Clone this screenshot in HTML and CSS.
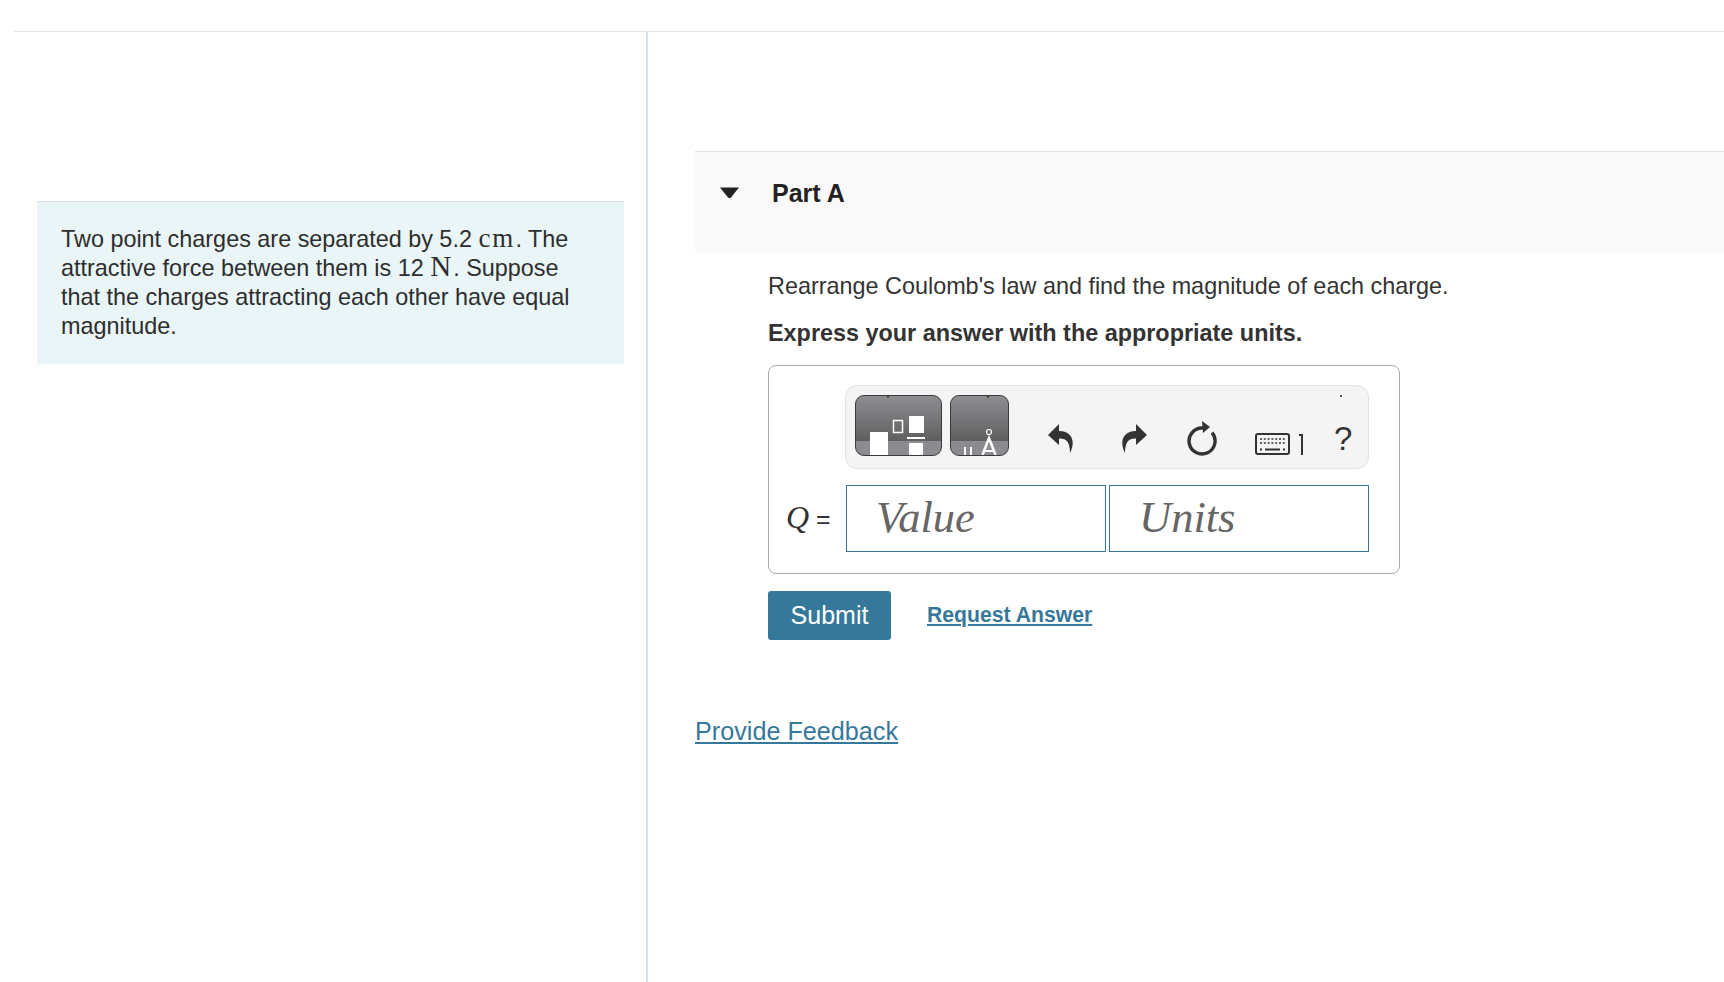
FILE: index.html
```html
<!DOCTYPE html>
<html lang="en">
<head>
    <meta charset="UTF-8">
    <title>Part A</title>
    <link rel="stylesheet" href="styles.css">
</head>
<body>
<div class="page">
    <aside class="sidebar">
        <div class="intro">
            Two point charges are separated by 5.2 <span class="unit">cm</span>. The<br>
            attractive force between them is 12 <span class="unit unit-big">N</span>. Suppose<br>
            that the charges attracting each other have equal<br>
            magnitude.
        </div>
    </aside>
    <main class="content">
        <div class="part-head">
            <svg class="caret" width="20" height="12" viewBox="0 0 20 12"><path d="M0 0.5 H19 L11 10.5 Q9.500 11.500 8 10.500 Z" fill="#222"/></svg>
            <h2>Part A</h2>
        </div>
        <div class="part-body">
            <p class="question">Rearrange Coulomb's law and find the magnitude of each charge.</p>
            <p class="instruct">Express your answer with the appropriate units.</p>
            <div class="answer-box">
                <div class="toolbar">
                    <div class="tool tool-wide">
                        <svg width="85" height="59" viewBox="0 0 85 59">
                            <rect x="31" y="0" width="2" height="1.500" fill="#333"/>
                            <rect x="14" y="36" width="18" height="23" fill="#fff"/>
                            <rect x="37.500" y="24.500" width="9" height="12" fill="none" stroke="#fff" stroke-width="1.500"/>
                            <rect x="53" y="20" width="15" height="17" fill="#fff"/>
                            <rect x="51" y="41" width="18" height="2" fill="#fff"/>
                            <rect x="53" y="47" width="14" height="12" fill="#fff"/>
                        </svg>
                    </div>
                    <div class="tool tool-narrow">
                        <svg width="57" height="59" viewBox="0 0 57 59">
                            <rect x="36" y="0" width="2" height="1.500" fill="#333"/>
                            <rect x="13" y="51" width="2" height="8" fill="#fff"/>
                            <rect x="19" y="51" width="2" height="8" fill="#fff"/>
                            <circle cx="38" cy="36" r="2.500" fill="none" stroke="#fff" stroke-width="1.200"/>
                            <path d="M31.500 59 L38 42 L44.500 59" fill="none" stroke="#fff" stroke-width="2.500"/>
                            <rect x="33" y="54" width="10" height="2" fill="#fff"/>
                        </svg>
                    </div>
                    <svg class="tb-icon icon-undo" width="26" height="32" viewBox="0 0 26 32"><path d="M11 1 L0 12 L11 22 V15.500 C18 15 22 19 22 30 C27 21 26 8 11 8 Z" fill="#333"/></svg>
                    <svg class="tb-icon icon-redo" width="26" height="32" viewBox="0 0 26 32"><path d="M15 1 L26 12 L15 22 V15.500 C8 15 4 19 4 30 C-1 21 0 8 15 8 Z" fill="#333"/></svg>
                    <svg class="tb-icon icon-reset" width="32" height="36" viewBox="0 0 32 36"><path d="M26 12.600 A13 13 0 1 1 17 8" fill="none" stroke="#333" stroke-width="3.400"/><path d="M16 1 L24 7 L17 13 Z" fill="#333"/></svg>
                    <svg class="tb-icon icon-keys" width="50" height="24" viewBox="0 0 50 24">
                        <rect x="1" y="1" width="33" height="20" rx="2" fill="none" stroke="#333" stroke-width="2"/>
                        <path d="M5 6 H30 M5 10 H30" stroke="#333" stroke-width="1.600" stroke-dasharray="2 1.800"/>
                        <path d="M5 16.500 H7 M10 16.500 H25 M28 16.500 H30" stroke="#333" stroke-width="1.800"/>
                        <path d="M44 2 H47 V22" fill="none" stroke="#333" stroke-width="2"/>
                    </svg>
                    <span class="tb-help">?</span>
                </div>
                <div class="input-row">
                    <span class="q-label"><i>Q</i> =</span>
                    <div class="field">Value</div>
                    <div class="field">Units</div>
                </div>
            </div>
            <div class="actions">
                <button class="submit">Submit</button>
                <a class="request" href="#">Request Answer</a>
            </div>
        </div>
        <a class="feedback" href="#">Provide Feedback</a>
    </main>
</div>
</body>
</html>
```

FILE: styles.css
```css
html, body {
    margin: 0;
    height: 100%;
    background: #fff;
    overflow: hidden;
}
body {
    font-family: "Liberation Sans", Arial, sans-serif;
    color: #333;
}
.page {
    display: flex;
    height: 950px;
    margin-top: 31px;
    margin-left: 14px;
    border-top: 1px solid #e3e6e8;
}
.sidebar {
    width: 632px;
    padding-top: 169px;
    border-right: 2px solid #d6e2ea;
    box-sizing: content-box;
}
.intro {
    margin-left: 23px;
    width: 587px;
    height: 163px;
    box-sizing: border-box;
    padding: 23px 24px 0;
    background: #e9f5f7;
    border-top: 1px solid #d9e3e6;
    font-size: 23.400px;
    line-height: 29px;
    color: #2e2e2e;
}
.unit {
    font-family: "Liberation Serif", serif;
    font-size: 27px;
    letter-spacing: 2px;
    line-height: 0;
}
.unit-big {
    font-size: 29px;
}
.content {
    flex: 1;
    padding-top: 119px;
    padding-left: 47px;
}
.part-head {
    display: flex;
    align-items: flex-start;
    height: 101px;
    background: #f9f9f9;
    border-top: 1px solid #e2e2e2;
}
.caret {
    margin: 35px 0 0 25px;
}
.part-head h2 {
    margin: 26px 0 0 32px;
    font-size: 25px;
    line-height: 30px;
    color: #222;
}
.part-body {
    padding: 19px 0 0 73px;
}
.question {
    margin: 0;
    font-size: 23.400px;
    line-height: 29px;
}
.instruct {
    margin: 18px 0 0;
    font-size: 23.400px;
    line-height: 29px;
    font-weight: bold;
}
.answer-box {
    width: 632px;
    height: 209px;
    margin-top: 17px;
    box-sizing: border-box;
    padding: 19px 30px 0 76px;
    border: 1px solid #aaa;
    border-radius: 8px;
}
.toolbar {
    position: relative;
    display: flex;
    align-items: flex-start;
    height: 84px;
    box-sizing: border-box;
    padding: 9px 0 0 9px;
    background: #f4f4f4;
    border: 1px solid #e2e2e2;
    border-radius: 12px;
}
.toolbar::after {
    content: "";
    position: absolute;
    top: 9px;
    right: 26px;
    width: 2px;
    height: 2px;
    background: #555;
}
.tool {
    height: 61px;
    box-sizing: border-box;
    border: 1px solid #3a3a3a;
    border-radius: 9px;
    overflow: hidden;
    background: linear-gradient(#8e8d92, #5f5f60 76%, #8c8b90 76%);
}
.tool svg {
    display: block;
}
.tool-wide {
    width: 87px;
}
.tool-narrow {
    width: 59px;
    margin-left: 8px;
}
.tb-icon {
    flex: none;
}
.icon-undo {
    margin: 28px 0 0 39px;
}
.icon-redo {
    margin: 28px 0 0 47px;
}
.icon-reset {
    margin: 25px 0 0 39px;
}
.icon-keys {
    margin: 38px 0 0 37px;
}
.tb-help {
    margin: 24px 0 0 29px;
    font-size: 33px;
    line-height: 40px;
    color: #333;
}
.input-row {
    display: flex;
    align-items: center;
    gap: 3px;
    margin: 16px 0 0 1px;
    position: relative;
}
.q-label {
    position: absolute;
    left: -60px;
    top: 14px;
    font-size: 25px;
    line-height: 36px;
}
.q-label i {
    font-family: "Liberation Serif", serif;
    font-size: 32px;
}
.field {
    width: 260px;
    height: 67px;
    box-sizing: border-box;
    padding-left: 29px;
    border: 1px solid #367896;
    background: #fff;
    font-family: "Liberation Serif", serif;
    font-style: italic;
    font-size: 44.500px;
    line-height: 63px;
    color: #666;
}
.actions {
    display: flex;
    align-items: center;
    margin-top: 17px;
}
.submit {
    width: 123px;
    height: 49px;
    padding: 0;
    border: none;
    border-radius: 3px;
    background: #36789a;
    color: #fff;
    font-family: "Liberation Sans", Arial, sans-serif;
    font-size: 25px;
}
.request {
    margin: 0 0 2px 36px;
    font-size: 21.200px;
    font-weight: bold;
    color: #36789a;
}
.feedback {
    display: inline-block;
    margin-top: 76px;
    font-size: 25.200px;
    line-height: 30px;
    color: #36789a;
}
```
